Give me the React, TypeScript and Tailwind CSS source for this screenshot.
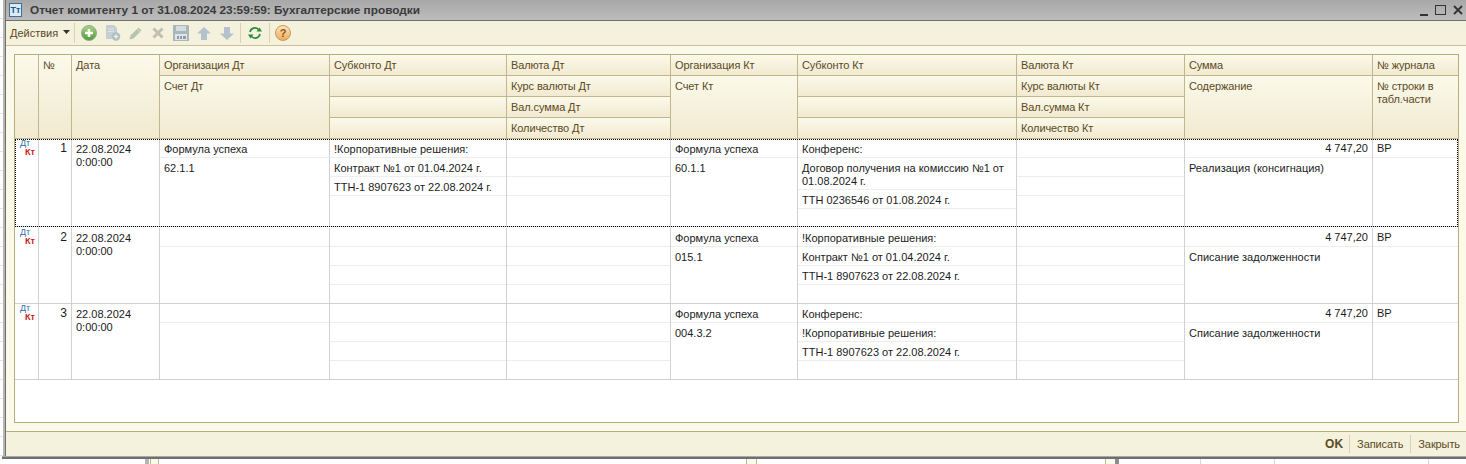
const gridCols = "grid grid-cols-[24px_33px_88px_170px_177px_164px_127px_219px_168px_188px_85px]";

type Line = { text?: string; h?: number; last?: boolean };

const blank: Line = {};

function SubLines({ lines }: { lines: Line[] }) {
  return (
    <div className="flex flex-col">
      {lines.map((line, i) => (
        <div
          key={i}
          className={`px-[4px] pt-[4px] leading-[13px] ${line.last ? "" : "border-b border-[#eeeeee]"}`}
          style={{ height: line.h ?? 19 }}
        >
          {line.text}
        </div>
      ))}
    </div>
  );
}

function HeadCell({ text, className = "" }: { text?: string; className?: string }) {
  return (
    <div
      className={`border-r border-b border-[#c0b78f] bg-gradient-to-b from-[#fbf9ea] to-[#f2ead0] px-[4px] pt-[4px] leading-[13px] tracking-[-0.1px] text-[#5b4a1f] ${className}`}
    >
      {text}
    </div>
  );
}

function Header() {
  return (
    <div className={`${gridCols} grid-rows-[21px_21px_21px_21px] h-[84px]`}>
      <HeadCell className="row-span-4" />
      <HeadCell text="№" className="row-span-4" />
      <HeadCell text="Дата" className="row-span-4" />
      <HeadCell text="Организация Дт" />
      <HeadCell text="Субконто Дт" />
      <HeadCell text="Валюта Дт" />
      <HeadCell text="Организация Кт" />
      <HeadCell text="Субконто Кт" />
      <HeadCell text="Валюта Кт" />
      <HeadCell text="Сумма" />
      <HeadCell text="№ журнала" className="border-r-0" />

      <HeadCell text="Счет Дт" className="row-span-3" />
      <HeadCell />
      <HeadCell text="Курс валюты Дт" />
      <HeadCell text="Счет Кт" className="row-span-3" />
      <HeadCell />
      <HeadCell text="Курс валюты Кт" />
      <HeadCell text="Содержание" className="row-span-3" />
      <HeadCell text="№ строки в табл.части" className="row-span-3 border-r-0" />

      <HeadCell />
      <HeadCell text="Вал.сумма Дт" />
      <HeadCell />
      <HeadCell text="Вал.сумма Кт" />

      <HeadCell />
      <HeadCell text="Количество Дт" />
      <HeadCell />
      <HeadCell text="Количество Кт" />
    </div>
  );
}

function DtKtIcon() {
  return (
    <div className="flex flex-col text-[9px] leading-[9px]">
      <span className="pl-[5px] text-[#2f6fa8]">Дт</span>
      <span className="pl-[10px] font-bold text-[#c8201a]">Кт</span>
    </div>
  );
}

type RowData = {
  num: number;
  orgDt: Line[];
  subDt: Line[];
  valDt: Line[];
  orgKt: Line[];
  subKt: Line[];
  valKt: Line[];
  content: string;
  height: number;
  focused?: boolean;
  topGap?: boolean;
};

function Cell({ children, className = "" }: { children?: React.ReactNode; className?: string }) {
  return <div className={`border-r border-[#cfd2d4] ${className}`}>{children}</div>;
}

function Row({ row }: { row: RowData }) {
  return (
    <div
      className={`${gridCols} border-b border-[#cfd2d4] ${row.topGap ? "pt-[1px]" : ""} ${row.focused ? "outline outline-1 outline-dotted outline-black -outline-offset-1" : ""}`}
      style={{ height: row.height }}
    >
      <Cell>
        <DtKtIcon />
      </Cell>
      <Cell className="px-[4px] pt-[3px] text-right text-[12px] leading-[13px]">{row.num}</Cell>
      <Cell className="px-[4px] pt-[4px] leading-[13px]">
        22.08.2024
        <br />
        0:00:00
      </Cell>
      <Cell>
        <SubLines lines={row.orgDt} />
      </Cell>
      <Cell>
        <SubLines lines={row.subDt} />
      </Cell>
      <Cell>
        <SubLines lines={row.valDt} />
      </Cell>
      <Cell>
        <SubLines lines={row.orgKt} />
      </Cell>
      <Cell>
        <SubLines lines={row.subKt} />
      </Cell>
      <Cell>
        <SubLines lines={row.valKt} />
      </Cell>
      <Cell>
        <div className="h-[19px] border-b border-[#eeeeee] px-[4px] pt-[3px] text-right leading-[13px]">4 747,20</div>
        <div className="px-[4px] pt-[4px] leading-[13px]">{row.content}</div>
      </Cell>
      <div>
        <div className="h-[19px] border-b border-[#eeeeee] px-[4px] pt-[3px] leading-[13px]">ВР</div>
      </div>
    </div>
  );
}

const rows: RowData[] = [
  {
    num: 1,
    height: 88,
    focused: true,
    orgDt: [{ text: "Формула успеха" }, { text: "62.1.1", last: true }],
    subDt: [
      { text: "!Корпоративные решения:" },
      { text: "Контракт №1 от 01.04.2024 г." },
      { text: "ТТН-1 8907623 от 22.08.2024 г." },
    ],
    valDt: [blank, blank, blank],
    orgKt: [{ text: "Формула успеха" }, { text: "60.1.1", last: true }],
    subKt: [
      { text: "Конференс:" },
      { text: "Договор получения на комиссию №1 от 01.08.2024 г.", h: 32 },
      { text: "ТТН 0236546 от 01.08.2024 г." },
    ],
    valKt: [blank, blank, blank],
    content: "Реализация (консигнация)",
  },
  {
    num: 2,
    height: 77,
    topGap: true,
    orgDt: [blank, { last: true }],
    subDt: [blank, blank, blank],
    valDt: [blank, blank, blank],
    orgKt: [{ text: "Формула успеха" }, { text: "015.1", last: true }],
    subKt: [
      { text: "!Корпоративные решения:" },
      { text: "Контракт №1 от 01.04.2024 г." },
      { text: "ТТН-1 8907623 от 22.08.2024 г." },
    ],
    valKt: [blank, blank, blank],
    content: "Списание задолженности",
  },
  {
    num: 3,
    height: 76,
    orgDt: [blank, { last: true }],
    subDt: [blank, blank, blank],
    valDt: [blank, blank, blank],
    orgKt: [{ text: "Формула успеха" }, { text: "004.3.2", last: true }],
    subKt: [
      { text: "Конференс:" },
      { text: "!Корпоративные решения:" },
      { text: "ТТН-1 8907623 от 22.08.2024 г." },
    ],
    valKt: [blank, blank, blank],
    content: "Списание задолженности",
  },
];

function Toolbar() {
  return (
    <div className="flex h-[25px] items-center border-b border-[#c9c19c] bg-[#f4f1dc] pl-[4px]">
      <span className="w-[53px] text-[#5b4a1f]">Действия</span>
      <svg width="7" height="4" viewBox="0 0 7 4" className="mb-[2px]">
        <path d="M0 0h7L3.5 4z" fill="#333" />
      </svg>
      <div className="ml-[4px] h-[20px] w-px bg-[#d8d2b0]" />
      {/* add */}
      <svg width="16" height="16" viewBox="0 0 16 16" className="ml-[6px]">
        <defs>
          <linearGradient id="addFill" x1="0" y1="0" x2="0" y2="1">
            <stop offset="0" stopColor="#a8d68a" />
            <stop offset="1" stopColor="#4f9a34" />
          </linearGradient>
        </defs>
        <circle cx="8" cy="8" r="7.5" fill="url(#addFill)" stroke="#9aa68e" />
        <path d="M8 4v8M4 8h8" stroke="#fff" strokeWidth="2.6" />
      </svg>
      {/* copy */}
      <svg width="16" height="16" viewBox="0 0 16 16" className="ml-[8px]">
        <path d="M1 0h8l3 3v11H1z" fill="#c3ced5" />
        <path d="M3 4h6M3 6.5h6" stroke="#dfe5e8" />
        <circle cx="11" cy="11.5" r="4.2" fill="#aebfc0" />
        <path d="M11 9.3v4.4M8.8 11.5h4.4" stroke="#e8edf0" strokeWidth="1.4" />
      </svg>
      {/* edit */}
      <svg width="13" height="13" viewBox="0 0 13 13" className="ml-[8px]">
        <path d="M9.5 0.5l3 3-8 8-4 1 1-4z" fill="#b6c4ae" />
        <path d="M8 2l3 3" stroke="#d5dccd" />
      </svg>
      {/* delete */}
      <svg width="12" height="12" viewBox="0 0 12 12" className="ml-[10px]">
        <path d="M1.5 1.5l9 9M10.5 1.5l-9 9" stroke="#c2bfb2" strokeWidth="3" />
      </svg>
      {/* save */}
      <svg width="16" height="16" viewBox="0 0 16 16" className="ml-[9px]">
        <path d="M0 0h15l1 1v15H0z" fill="#a9b6be" />
        <path d="M3 1h10v5H3z" fill="#d5dce0" />
        <path d="M2 9h12v6H2z" fill="#dfe4e6" />
        <path d="M4 11h2v3H4zM7 11h2v3H7zM10 11h3v3h-3z" fill="#8f9ca4" />
      </svg>
      {/* up */}
      <svg width="14" height="13" viewBox="0 0 14 13" className="ml-[8px]">
        <path d="M7 0l7 6.5H10V13H4V6.5H0z" fill="#b3c2cc" />
      </svg>
      {/* down */}
      <svg width="14" height="13" viewBox="0 0 14 13" className="ml-[9px]">
        <path d="M7 13L0 6.5h4V0h6v6.5h4z" fill="#b3c2cc" />
      </svg>
      <div className="ml-[6px] h-[20px] w-px bg-[#d8d2b0]" />
      {/* refresh */}
      <svg width="14" height="14" viewBox="0 0 14 14" fill="none" className="ml-[7px]">
        <path d="M2 6a5 5 0 0 1 8.5-2.5" stroke="#2f8a3a" strokeWidth="1.7" />
        <path d="M12 8a5 5 0 0 1-8.5 2.5" stroke="#2f8a3a" strokeWidth="1.7" />
        <path d="M8.5 5.5H14L11.5 1.5zM5.5 8.5H0L2.5 12.5z" fill="#2f8a3a" />
      </svg>
      <div className="ml-[7px] h-[20px] w-px bg-[#d8d2b0]" />
      {/* help */}
      <div className="ml-[5px] flex h-[16px] w-[16px] items-center justify-center rounded-full border border-[#c49a5c] bg-gradient-to-b from-[#fbe3bd] to-[#f0ac5c] text-[11px] font-bold leading-none text-[#8a5a10]">
        ?
      </div>
    </div>
  );
}

export default function App() {
  return (
    <div className="h-[464px] w-[1466px] overflow-hidden bg-white font-['Liberation_Sans',Arial,sans-serif] text-[11px] text-[#1c1c1c]">
      <div className="flex h-[456px]">
        <div className="w-[3px] bg-[repeating-linear-gradient(to_bottom,#ffffff_0,#ffffff_18px,#e2e2e2_18px,#e2e2e2_19px)]" />
        <div className="w-[2px] bg-[#b5b5b5]" />
        <div className="w-px bg-[#6f6f6f]" />
        <div className="flex flex-1 flex-col">
          <div className="flex h-[21px] items-center border-b border-[#6f6f6f] bg-gradient-to-b from-[#a8a8a8] to-[#bcbcbc] pl-[3px]">
            <div className="flex h-[14px] w-[13px] items-center justify-center border border-[#3f6f96] bg-[#d9ebf7] text-[9px] font-bold leading-none text-[#1f5a8a]">
              Тт
            </div>
            <span className="ml-[8px] pt-[1px] text-[11.8px] font-bold text-[#3a3a3a]">
              Отчет комитенту 1 от 31.08.2024 23:59:59: Бухгалтерские проводки
            </span>
            <div className="ml-auto flex items-center gap-[7px] pr-[3px]">
              <div className="mt-[9px] h-[2px] w-[8px] bg-[#333]" />
              <div className="h-[10px] w-[11px] border border-[#333]" />
              <svg width="10" height="10" viewBox="0 0 10 10">
                <path d="M1 1l8 8M9 1L1 9" stroke="#333" strokeWidth="1.8" />
              </svg>
            </div>
          </div>
          <Toolbar />
          <div className="flex flex-1 flex-col bg-[#fbf9ea] pt-[8px] pr-[7px] pb-[8px] pl-[8px]">
            <div className="flex flex-1 flex-col border border-[#b8ae7c] bg-white">
              <Header />
              {rows.map((row) => (
                <Row key={row.num} row={row} />
              ))}
            </div>
          </div>
          <div className="flex h-[25px] items-center justify-end border-t border-[#b8ae7c] bg-[#f4f1dc] pr-[6px] tracking-[-0.1px] text-[#5b4a1f]">
            <span className="pr-[6px] text-[12px] font-bold tracking-normal">OK</span>
            <div className="h-[18px] w-px bg-[#d8d2b0]" />
            <span className="px-[7px]">Записать</span>
            <div className="h-[18px] w-px bg-[#d8d2b0]" />
            <span className="pl-[7px]">Закрыть</span>
          </div>
        </div>
      </div>
      <div className="ml-[2px] h-px bg-[#a8a8a8]" />
      <div className="ml-[2px] h-[2px] bg-[#6f6f6f]" />
      <div className="flex h-[5px]">
        <div className="ml-[145px] h-full w-[4px] bg-[#b5b5b5]" />
        <div className="ml-px h-full w-[9px] border-x border-[#c0b78f] bg-[#fbf9ea]" />
        <div className="ml-[587px] h-full w-[11px] border-x border-[#c0b78f] bg-[#fbf9ea]" />
        <div className="ml-[348px] h-full w-[10px] border-l border-[#c0b78f] bg-[#fbf9ea]" />
        <div className="h-full w-[4px] bg-[#8e8e8e]" />
        <div className="ml-[81px] h-full w-px bg-[#d8d8d8]" />
        <div className="ml-[73px] h-full w-px bg-[#d8d8d8]" />
        <div className="ml-[153px] h-full w-px bg-[#d8d8d8]" />
      </div>
    </div>
  );
}
